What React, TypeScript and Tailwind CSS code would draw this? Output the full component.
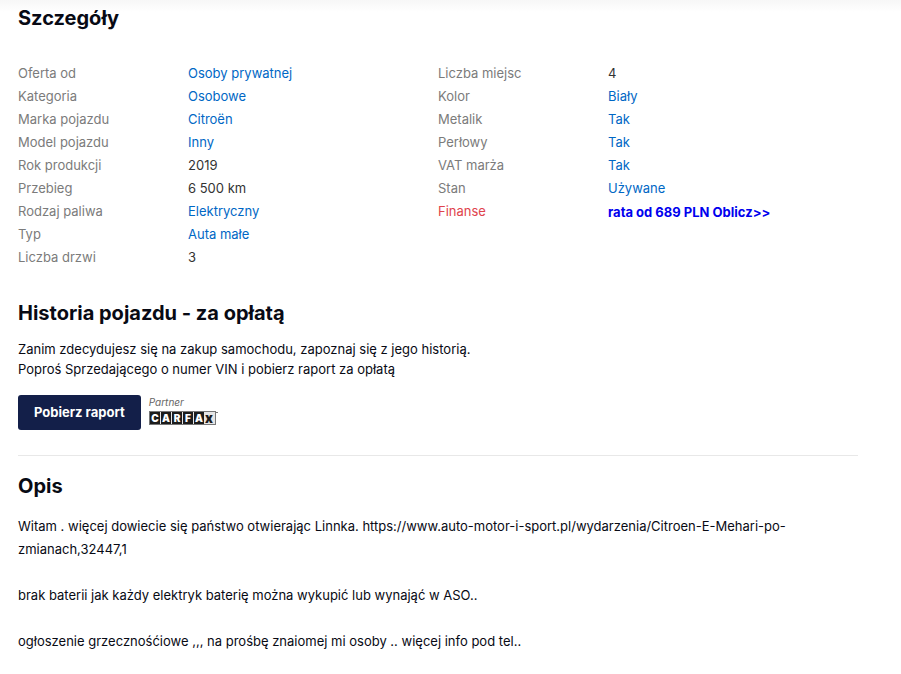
import React from "react";

type Row = { label: string; value: string; link?: boolean };

const left: Row[] = [
  { label: "Oferta od", value: "Osoby prywatnej", link: true },
  { label: "Kategoria", value: "Osobowe", link: true },
  { label: "Marka pojazdu", value: "Citroën", link: true },
  { label: "Model pojazdu", value: "Inny", link: true },
  { label: "Rok produkcji", value: "2019" },
  { label: "Przebieg", value: "6 500 km" },
  { label: "Rodzaj paliwa", value: "Elektryczny", link: true },
  { label: "Typ", value: "Auta małe", link: true },
  { label: "Liczba drzwi", value: "3" },
];

const right: Row[] = [
  { label: "Liczba miejsc", value: "4" },
  { label: "Kolor", value: "Biały", link: true },
  { label: "Metalik", value: "Tak", link: true },
  { label: "Perłowy", value: "Tak", link: true },
  { label: "VAT marża", value: "Tak", link: true },
  { label: "Stan", value: "Używane", link: true },
];

function Param({ label, value, link }: Row) {
  return (
    <div className="flex">
      <dt className="w-[170px] shrink-0 text-[#7b7b7b]">{label}</dt>
      <dd className="text-[#333333]">
        {link ? <a href="#" className="text-[#0067c5]">{value}</a> : value}
      </dd>
    </div>
  );
}

function Heading({ children }: { children: React.ReactNode }) {
  return <h2 className="text-xl leading-7 font-bold">{children}</h2>;
}

function CarfaxLogo() {
  return (
    <svg width="70" height="15" viewBox="0 0 70 15" role="img" aria-label="CARFAX">
      <rect x="0.5" y="1.5" width="66" height="13" fill="#e6e6e6" stroke="#777777" />
      {["C", "A", "R", "F", "A"].map((letter, i) => (
        <g key={i}>
          <rect x={1 + i * 11} y="2" width="10" height="12" fill="#1c1c1c" />
          <text x={6 + i * 11} y="12" textAnchor="middle" fontSize="10" fontWeight="900" fill="#ffffff">
            {letter}
          </text>
        </g>
      ))}
      <text x="60" y="13" textAnchor="middle" fontSize="13" fontWeight="900" fill="#1c1c1c">x</text>
      <path d="M67 2.5h2" stroke="#777777" />
    </svg>
  );
}

export default function App() {
  return (
    <main className="min-h-screen bg-white bg-linear-to-b from-[#f7f7f7] to-white to-[12px] px-[18px] pt-1 font-[Inter,'Liberation_Sans',sans-serif] text-[13px] text-[#080a14]">
      <div className="max-w-[840px]">
        <section>
          <Heading>Szczegóły</Heading>
          <div className="mt-[30px] grid grid-cols-2 leading-[23px]">
            <dl>{left.map((r) => <Param key={r.label} {...r} />)}</dl>
            <dl>
              {right.map((r) => <Param key={r.label} {...r} />)}
              <div className="flex">
                <dt className="w-[170px] shrink-0 text-[#e0434c]">Finanse</dt>
                <dd className="leading-[25px]"><a href="#" className="font-bold text-[#0000ee]">rata od 689 PLN Oblicz&gt;&gt;</a></dd>
              </div>
            </dl>
          </div>
        </section>
        <section className="mt-[30px] border-b border-[#e8e8e8] pb-[25px]">
          <Heading>Historia pojazdu - za opłatą</Heading>
          <p className="mt-3 leading-5">
            Zanim zdecydujesz się na zakup samochodu, zapoznaj się z jego historią.<br />
            Poproś Sprzedającego o numer VIN i pobierz raport za opłatą
          </p>
          <div className="mt-4 flex items-start gap-2">
            <button type="button" className="h-[35px] rounded-[3px] bg-[#131f49] px-4 font-bold text-white">Pobierz raport</button>
            <div>
              <div className="text-[10px] leading-[15px] text-[#666666] italic">Partner</div>
              <CarfaxLogo />
            </div>
          </div>
        </section>
        <section className="mt-4">
          <Heading>Opis</Heading>
          <div className="mt-[15px] leading-[23px]">
            <p>Witam . więcej dowiecie się państwo otwierając Linnka. https://www.auto-motor-i-sport.pl/wydarzenia/Citroen-E-Mehari-po-<wbr />zmianach,32447,1</p>
            <p className="mt-[23px]">brak baterii jak każdy elektryk baterię można wykupić lub wynająć w ASO..</p>
            <p className="mt-[23px]">ogłoszenie grzecznośćiowe ,,, na prośbę znaiomej mi osoby .. więcej info pod tel..</p>
          </div>
        </section>
      </div>
    </main>
  );
}
